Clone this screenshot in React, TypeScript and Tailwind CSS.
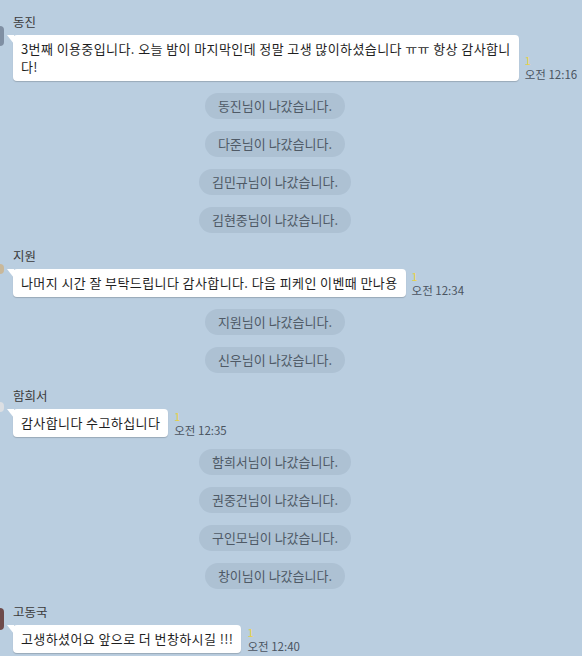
import React from 'react';

type Block =
  | { kind: 'msg'; name: string; lines: string[]; time: string; avatar: string; avatarTop: number; avatarH: number }
  | { kind: 'sys'; text: string };

const blocks: Block[] = [
  {
    kind: 'msg',
    name: '동진',
    lines: ['3번째 이용중입니다. 오늘 밤이 마지막인데 정말 고생 많이하셨습니다 ㅠㅠ 항상 감사합니', '다!'],
    time: '오전 12:16',
    avatar: 'bg-[#7f8fa3]',
    avatarTop: 12,
    avatarH: 20,
  },
  { kind: 'sys', text: '동진님이 나갔습니다.' },
  { kind: 'sys', text: '다준님이 나갔습니다.' },
  { kind: 'sys', text: '김민규님이 나갔습니다.' },
  { kind: 'sys', text: '김현중님이 나갔습니다.' },
  {
    kind: 'msg',
    name: '지원',
    lines: ['나머지 시간 잘 부탁드립니다 감사합니다. 다음 피케인 이벤때 만나용'],
    time: '오전 12:34',
    avatar: 'bg-[#c9b89a]',
    avatarTop: 16,
    avatarH: 10,
  },
  { kind: 'sys', text: '지원님이 나갔습니다.' },
  { kind: 'sys', text: '신우님이 나갔습니다.' },
  {
    kind: 'msg',
    name: '함희서',
    lines: ['감사합니다 수고하십니다'],
    time: '오전 12:35',
    avatar: 'bg-[#dcdfe3]',
    avatarTop: 14,
    avatarH: 10,
  },
  { kind: 'sys', text: '함희서님이 나갔습니다.' },
  { kind: 'sys', text: '권중건님이 나갔습니다.' },
  { kind: 'sys', text: '구인모님이 나갔습니다.' },
  { kind: 'sys', text: '창이님이 나갔습니다.' },
  {
    kind: 'msg',
    name: '고동국',
    lines: ['고생하셨어요 앞으로 더 번창하시길 !!!'],
    time: '오전 12:40',
    avatar: 'bg-[#6e4b4b]',
    avatarTop: 4,
    avatarH: 22,
  },
];

const Message = ({ b }: { b: Extract<Block, { kind: 'msg' }> }) => (
  <div className="relative mt-[15px] first:mt-0 pl-[13px]">
    {/* avatar, mostly scrolled off the left edge */}
    <div
      className={`absolute left-0 w-[4px] rounded-r-sm ${b.avatar}`}
      style={{ top: b.avatarTop, height: b.avatarH }}
    />
    <div className="text-[12.5px] leading-[16px] text-[#3a3a3a]">{b.name}</div>
    <div className="mt-[5px] flex items-end">
      <div className="relative rounded-[4px] bg-white px-2 py-[5px] text-[13px] leading-[18px] tracking-[0.4px] text-[#1f1f1f] shadow-[0_1px_1px_rgba(0,0,0,0.18)]">
        <svg className="absolute -left-[6px] top-0" width="7" height="9" viewBox="0 0 7 9">
          <path d="M0 0 H7 V9 Z" fill="#ffffff" />
        </svg>
        {b.lines.map((l, i) => (
          <div key={i} className="whitespace-nowrap">
            {l}
          </div>
        ))}
      </div>
      <div className="ml-[6px] flex flex-col">
        <span className="text-[11px] leading-[13px] text-[#e8d146]">1</span>
        <span className="text-[11.5px] leading-[14px] text-[#4a5460] whitespace-nowrap">{b.time}</span>
      </div>
    </div>
  </div>
);

const SystemNotice = ({ text }: { text: string }) => (
  <div className="mt-3 flex w-[550px] justify-center">
    <div className="rounded-full bg-[#adc1d3] px-[13px] py-[4px] text-[13px] leading-[18px] text-[#4f5a66]">
      {text}
    </div>
  </div>
);

export default function App() {
  return (
    <div
      className="h-[656px] w-[582px] overflow-hidden bg-[#bacee0] pt-[14px]"
      style={{ fontFamily: '"Noto Sans CJK KR", "Noto Sans", sans-serif' }}
    >
      {blocks.map((b, i) =>
        b.kind === 'msg' ? <Message key={i} b={b} /> : <SystemNotice key={i} text={b.text} />
      )}
    </div>
  );
}
